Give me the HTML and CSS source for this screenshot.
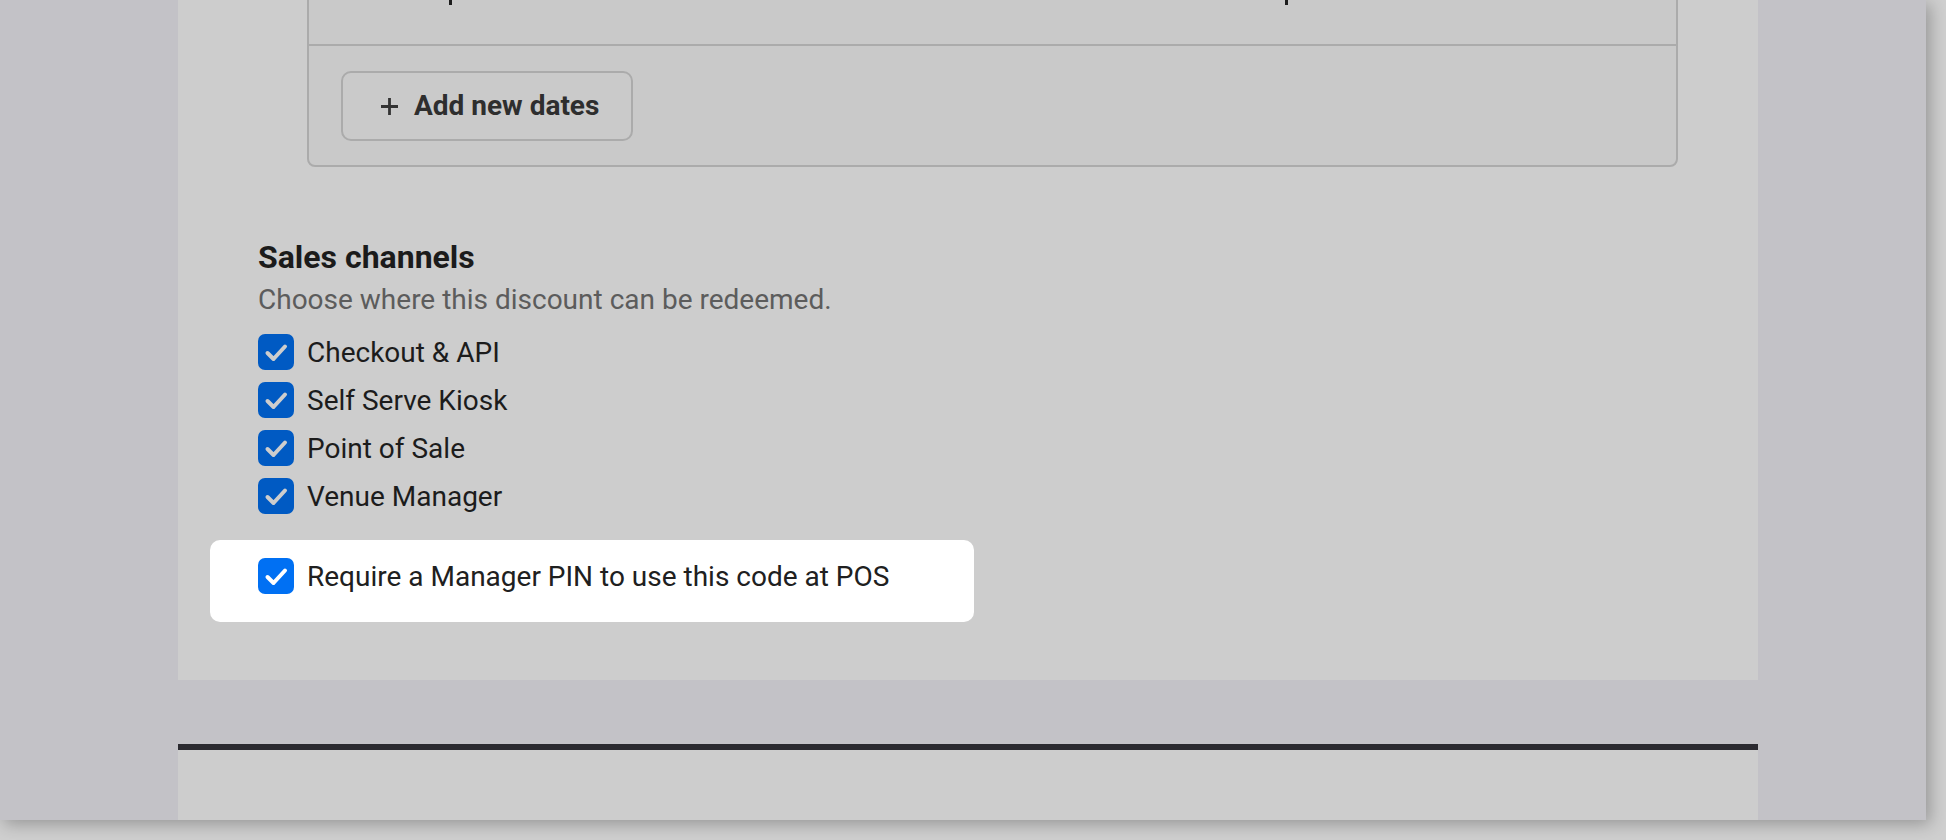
FILE: index.html
```html
<!DOCTYPE html>
<html lang="en">
<head>
<meta charset="utf-8">
<title>Discount – Sales channels</title>
<link rel="stylesheet" href="styles.css">
</head>
<body>
<div class="window">
  <main class="panel">
    <section class="card">
      <div class="card-top">
        <span class="mark"></span>
        <span class="mark"></span>
      </div>
      <div class="card-bottom">
        <button class="btn-add" type="button">
          <svg class="plus" width="19" height="19" viewBox="0 0 19 19" aria-hidden="true"><path d="M9.5 1V18M1 9.5H18" stroke="#333" stroke-width="2.8" fill="none"/></svg>
          <span>Add new dates</span>
        </button>
      </div>
    </section>

    <section class="channels">
      <h2 class="channels-title">Sales channels</h2>
      <p class="channels-sub">Choose where this discount can be redeemed.</p>
      <ul class="checklist">
        <li class="check-row">
          <svg class="cb" width="36" height="36" viewBox="0 0 36 36" aria-hidden="true"><rect width="36" height="36" rx="7" fill="#005ac3"/><path d="M9.5 19L15.5 25L27 12.5" stroke="#cdcdcd" stroke-width="4" stroke-linecap="round" stroke-linejoin="round" fill="none"/></svg>
          <span class="label">Checkout &amp; API</span>
        </li>
        <li class="check-row">
          <svg class="cb" width="36" height="36" viewBox="0 0 36 36" aria-hidden="true"><rect width="36" height="36" rx="7" fill="#005ac3"/><path d="M9.5 19L15.5 25L27 12.5" stroke="#cdcdcd" stroke-width="4" stroke-linecap="round" stroke-linejoin="round" fill="none"/></svg>
          <span class="label">Self Serve Kiosk</span>
        </li>
        <li class="check-row">
          <svg class="cb" width="36" height="36" viewBox="0 0 36 36" aria-hidden="true"><rect width="36" height="36" rx="7" fill="#005ac3"/><path d="M9.5 19L15.5 25L27 12.5" stroke="#cdcdcd" stroke-width="4" stroke-linecap="round" stroke-linejoin="round" fill="none"/></svg>
          <span class="label">Point of Sale</span>
        </li>
        <li class="check-row">
          <svg class="cb" width="36" height="36" viewBox="0 0 36 36" aria-hidden="true"><rect width="36" height="36" rx="7" fill="#005ac3"/><path d="M9.5 19L15.5 25L27 12.5" stroke="#cdcdcd" stroke-width="4" stroke-linecap="round" stroke-linejoin="round" fill="none"/></svg>
          <span class="label">Venue Manager</span>
        </li>
      </ul>
      <div class="pin-row">
        <div class="check-row">
          <svg class="cb" width="36" height="36" viewBox="0 0 36 36" aria-hidden="true"><rect width="36" height="36" rx="7" fill="#0070f3"/><path d="M9.5 19L15.5 25L27 12.5" stroke="#ffffff" stroke-width="4" stroke-linecap="round" stroke-linejoin="round" fill="none"/></svg>
          <span class="label">Require a Manager PIN to use this code at POS</span>
        </div>
      </div>
    </section>
  </main>
  <div class="footer-panel"></div>
</div>
</body>
</html>
```

FILE: styles.css
```css
* {
  box-sizing: border-box;
}

html, body {
  margin: 0;
  padding: 0;
}

body {
  background: #cfcfcf;
  font-family: Roboto, "Liberation Sans", Arial, sans-serif;
  width: 1946px;
  height: 840px;
  overflow: hidden;
}

.window {
  width: 1926px;
  height: 820px;
  background: #c3c2c7;
  overflow: hidden;
  box-shadow: 4px 4px 16px rgba(0, 0, 0, 0.28);
  position: relative;
}

.panel {
  display: flex;
  flex-direction: column;
  margin-left: 178px;
  width: 1580px;
  height: 680px;
  padding: 0 80px;
  background: #cdcdcd;
}

.card {
  margin-top: -40px;
  margin-left: 49px;
  border: 2px solid #ababab;
  border-radius: 8px;
  background: #c9c9c9;
}

.card-top {
  display: flex;
  align-items: flex-start;
  gap: 833px;
  height: 84px;
  padding: 33px 0 0 140px;
  border-bottom: 2px solid #ababab;
}

.mark {
  display: block;
  width: 3px;
  height: 10px;
  background: #1c1c1c;
}

.card-bottom {
  padding: 25px 32px 24px;
}

.btn-add {
  display: inline-flex;
  align-items: center;
  gap: 15px;
  height: 70px;
  padding: 0 32px 0 37px;
  border: 2px solid #ababab;
  border-radius: 10px;
  background: #cacaca;
  font-family: inherit;
  font-size: 28px;
  font-weight: 700;
  color: #2e2e2e;
  line-height: 1;
}

.plus {
  display: block;
  flex: none;
}

.channels {
  margin-top: 71px;
}

.channels-title {
  margin: 0;
  font-size: 32px;
  line-height: 38px;
  font-weight: 700;
  color: #1b1b1b;
}

.channels-sub {
  margin: 3px 0 0;
  font-size: 28px;
  line-height: 42px;
  color: #5c5c5c;
}

.checklist {
  list-style: none;
  margin: 13px 0 0;
  padding: 0;
  display: flex;
  flex-direction: column;
  gap: 12px;
}

.check-row {
  display: flex;
  align-items: center;
  gap: 13px;
  height: 36px;
  font-size: 28px;
  line-height: 36px;
  color: #1c1c1c;
}

.label {
  padding-top: 2px;
}

.cb {
  display: block;
  flex: none;
}

.pin-row {
  margin: 26px 0 0 -48px;
  width: 764px;
  padding: 18px 48px 28px;
  background: #ffffff;
  border-radius: 10px;
}

.pin-row .check-row {
  color: #202020;
}

.footer-panel {
  margin: 64px 0 0 178px;
  width: 1580px;
  height: 76px;
  border-top: 6px solid #2b2a30;
  background: #cdcdcd;
}
```
